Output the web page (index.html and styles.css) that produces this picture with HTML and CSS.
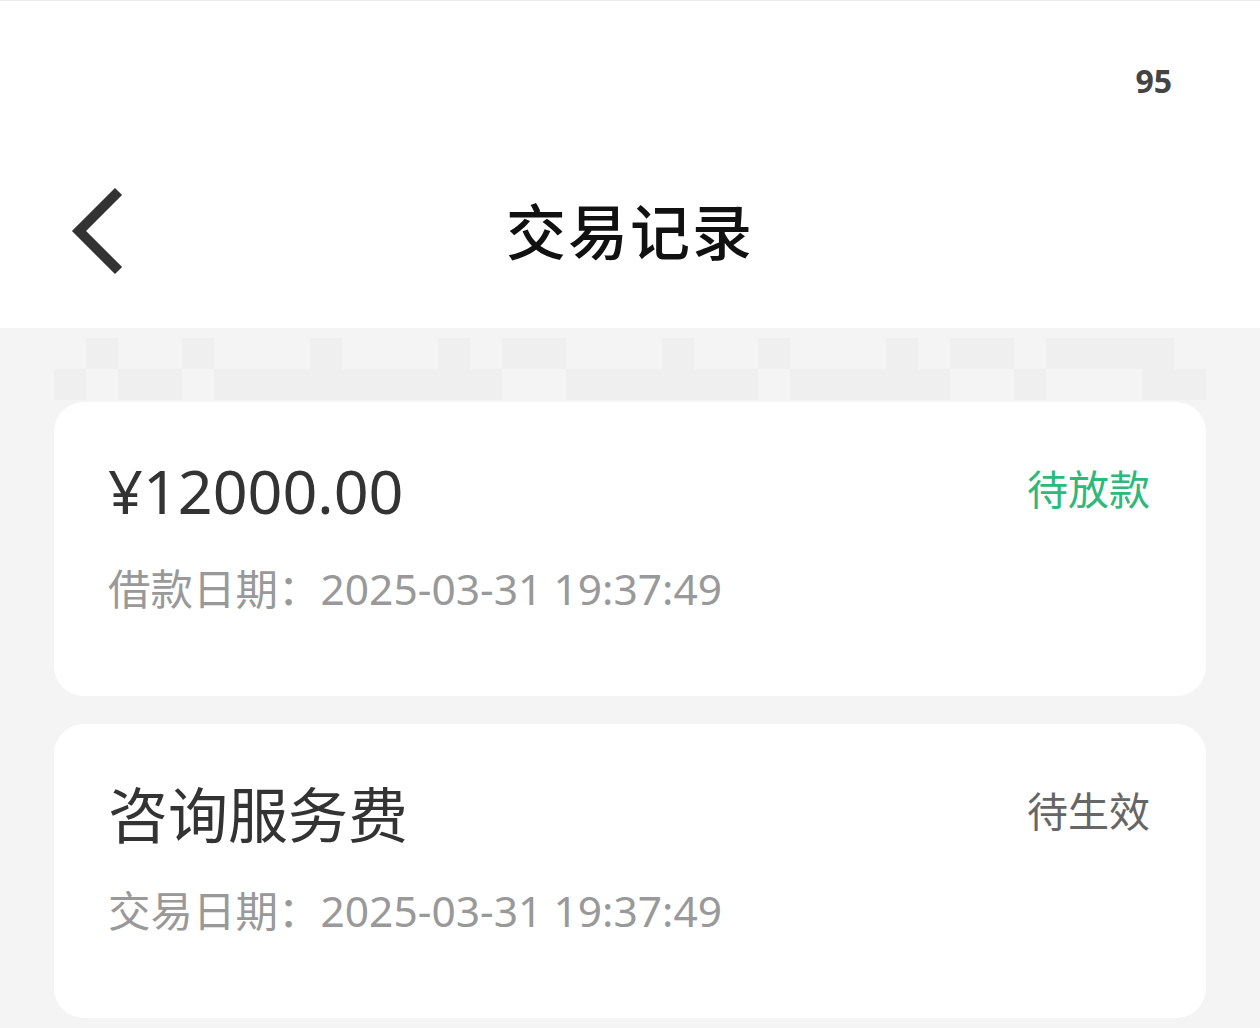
FILE: index.html
```html
<!DOCTYPE html>
<html lang="zh-CN">
<head>
  <meta charset="UTF-8">
  <meta name="viewport" content="width=device-width, initial-scale=1.0">
  <title>交易记录</title>
  <link rel="stylesheet" href="styles.css">
</head>
<body>
  <div class="header">
    <div class="status-bar">
      <span class="battery">95</span>
    </div>
    <div class="nav-bar">
      <a class="back" href="#">
        <svg width="60" height="90" viewBox="0 0 60 90">
          <path d="M49 8 L13 44 L49 80" fill="none" stroke="#333" stroke-width="10" stroke-linecap="square"/>
        </svg>
      </a>
      <h1 class="title">交易记录</h1>
    </div>
  </div>

  <div class="content">
    <!-- 模糊处理的筛选栏 -->
    <div class="mosaic">
      <i></i><i class="d"></i><i></i><i></i><i class="d"></i><i></i><i></i><i></i><i class="d"></i><i></i><i></i><i></i><i class="d"></i><i></i><i class="d"></i><i class="d"></i><i></i><i></i><i></i><i class="d"></i><i></i><i></i><i class="d"></i><i></i><i></i><i></i><i class="d"></i><i></i><i class="d"></i><i class="d"></i><i></i><i class="d"></i><i class="d"></i><i class="d"></i><i class="d"></i><i></i>
      <i class="d"></i><i></i><i class="d"></i><i class="d"></i><i></i><i class="d"></i><i class="d"></i><i class="d"></i><i class="d"></i><i class="d"></i><i class="d"></i><i class="d"></i><i class="d"></i><i class="d"></i><i></i><i></i><i class="d"></i><i class="d"></i><i class="d"></i><i class="d"></i><i class="d"></i><i class="d"></i><i></i><i class="d"></i><i class="d"></i><i class="d"></i><i class="d"></i><i class="d"></i><i></i><i></i><i class="d"></i><i></i><i></i><i></i><i class="d"></i><i class="d"></i>
    </div>

    <div class="card">
      <div class="card-row">
        <span class="amount">¥12000.00</span>
        <span class="status green">待放款</span>
      </div>
      <div class="date">借款日期：2025-03-31 19:37:49</div>
    </div>

    <div class="card">
      <div class="card-row">
        <span class="amount cn">咨询服务费</span>
        <span class="status">待生效</span>
      </div>
      <div class="date">交易日期：2025-03-31 19:37:49</div>
    </div>
  </div>
</body>
</html>
```

FILE: styles.css
```css
body {
  margin: 0;
  padding: 0;
  font-family: "Noto Sans", "Noto Sans CJK SC", sans-serif;
  background-color: #f4f4f4;
  width: 1260px;
  height: 1028px;
  overflow: hidden;
}

.header {
  background: #fff;
  height: 328px;
  border-top: 1px solid #ececec;
  box-sizing: border-box;
}

.status-bar {
  height: 150px;
  display: flex;
  justify-content: flex-end;
  padding-right: 88px;
}

.battery {
  margin-top: 60px;
  font-size: 32px;
  font-weight: 700;
  color: #444;
  line-height: 40px;
}

.nav-bar {
  position: relative;
  height: 170px;
  display: flex;
  align-items: center;
  justify-content: center;
}

.back {
  position: absolute;
  left: 66px;
  top: 36px;
}

.title {
  margin: 0;
  margin-top: -16px;
  font-family: "Noto Sans CJK SC", sans-serif;
  font-size: 60px;
  font-weight: 500;
  color: #111;
  letter-spacing: 2px;
}

.content {
  padding: 10px 54px 0;
}

.mosaic {
  display: grid;
  grid-template-columns: repeat(36, 32px);
  grid-auto-rows: 31px;
  margin-bottom: 2px;
}

.mosaic i {
  background: #f4f4f4;
}

.mosaic i.d {
  background: #efefef;
}

.card {
  background: #fff;
  border-radius: 30px;
  height: 294px;
  box-sizing: border-box;
  padding: 48px 56px 0 54px;
  margin-bottom: 28px;
}

.card-row {
  display: flex;
  justify-content: space-between;
  align-items: center;
  height: 80px;
}

.amount {
  font-size: 61px;
  color: #333;
}

.amount.cn {
  font-size: 60px;
}

.status {
  font-family: "Noto Sans CJK SC", sans-serif;
  font-size: 41px;
  color: #666;
  margin-top: -6px;
}

.status.green {
  color: #2eb87a;
}

.date {
  margin-top: 26px;
  font-size: 42.5px;
  color: #999;
}
```
